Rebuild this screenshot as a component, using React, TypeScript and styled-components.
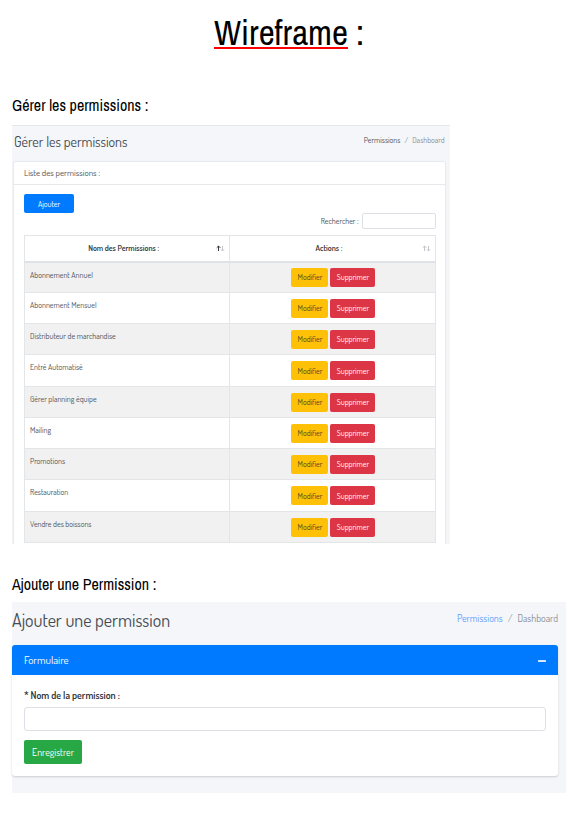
import React from "react";
import styled, { createGlobalStyle } from "styled-components";

const GlobalStyle = createGlobalStyle`
  *, *::before, *::after { box-sizing: border-box; }
  body {
    margin: 0;
    background: #fff;
    color: #000;
    font-family: "Liberation Sans Narrow", "Arial Narrow", "Archivo Narrow", "Roboto Condensed", "Liberation Sans", sans-serif;
  }
  button, input { font: inherit; }
`;

const Page = styled.main`
  padding: 13px 6px 23px 12px;
`;

const Title = styled.h1`
  margin: 0;
  text-align: center;
  font-size: 35px;
  line-height: 40px;
  font-weight: 400;
`;

const Misspelled = styled.span`
  display: inline-block;
  height: 36px;
  border-bottom: 2px solid #f00;
`;

const SectionTitle = styled.h2<{ $top: number }>`
  margin: ${(p) => p.$top}px 0 0;
  font-size: 16px;
  line-height: 20px;
  font-weight: 400;
`;

const Panel = styled.section<{ $width: string }>`
  width: ${(p) => p.$width};
  background: #f4f6f9;
  color: #495057;
  font-family: Dosis, Lato, sans-serif;
`;

const ListPanel = styled(Panel)`
  margin-top: 10px;
  padding: 0 5px 0 2px;
  border-top: 1px solid #e4e7ec;
`;

const FormPanel = styled(Panel)`
  margin-top: 8px;
  padding: 0 8px 17px 0;
`;

const PanelHead = styled.header<{ $height: number }>`
  display: flex;
  justify-content: space-between;
  height: ${(p) => p.$height}px;
`;

const Heading = styled.h3<{ $size: number }>`
  margin: 0;
  font-size: ${(p) => p.$size}px;
  line-height: ${(p) => p.$size + 18}px;
  font-weight: 400;
  color: #454b51;
`;

const Breadcrumb = styled.nav<{ $size: number }>`
  display: flex;
  gap: ${(p) => (p.$size > 8 ? 5 : 4)}px;
  font-size: ${(p) => p.$size}px;
  line-height: ${(p) => (p.$size > 8 ? 32 : 29)}px;
  color: #868e96;
`;

const Crumb = styled.a<{ $color: string }>`
  color: ${(p) => p.$color};
  text-decoration: none;
`;

const ListCard = styled.div`
  background: #fff;
  border-radius: 2px 2px 0 0;
  box-shadow: 0 0 1px 1px #e6e9ef;
  clip-path: inset(-2px -2px 0 -2px);
`;

const ListCardHead = styled.div`
  height: 23px;
  padding: 0 10px;
  border-bottom: 1px solid #e6e8eb;
  font-size: 9px;
  line-height: 22px;
`;

const ListCardBody = styled.div`
  padding: 9px 9px 1px 10px;
`;

const AddButton = styled.button`
  display: block;
  width: 50px;
  height: 19px;
  padding: 0;
  border: 0;
  border-radius: 2px;
  background: #007bff;
  color: #fff;
  font-size: 8px;
`;

const SearchLabel = styled.label`
  display: flex;
  justify-content: flex-end;
  align-items: center;
  gap: 3px;
  margin-bottom: 6px;
  font-size: 8px;
`;

const SearchInput = styled.input`
  width: 74px;
  height: 16px;
  border: 1px solid #dde1e6;
  border-radius: 2px;
  background: #fff;
`;

const Table = styled.table`
  width: 100%;
  table-layout: fixed;
  border-collapse: collapse;
  border: 1px solid #e3e6e9;
  font-size: 8px;
  line-height: 10px;
`;

const HeadCell = styled.th`
  height: 26px;
  padding: 0 4px 0 6px;
  border: 1px solid #e3e6e9;
  border-bottom: 2px solid #dfe3e8;
  color: #343a40;
  font-weight: 600;
`;

const HeadInner = styled.div`
  display: flex;
  align-items: center;
`;

const HeadText = styled.span`
  flex: 1;
  text-align: center;
`;

const Row = styled.tr`
  height: 31px;
  &:nth-child(odd) { background: #f1f1f1; }
  &:nth-child(4n) { height: 32px; }
`;

const NameCell = styled.td`
  padding: 7px 5px 0;
  border: 1px solid #e3e6e9;
  vertical-align: top;
`;

const ActionCell = styled.td`
  padding: 0;
  border: 1px solid #e3e6e9;
`;

const Actions = styled.div`
  display: flex;
  justify-content: center;
  gap: 2px;
  padding-left: 2px;
`;

const ActionButton = styled.button<{ $kind: "edit" | "delete" }>`
  width: ${(p) => (p.$kind === "edit" ? 37 : 45)}px;
  height: 19px;
  padding: 0;
  border: 0;
  border-radius: 2px;
  background: ${(p) => (p.$kind === "edit" ? "#ffc107" : "#dc3545")};
  color: ${(p) => (p.$kind === "edit" ? "#4b4426" : "#fff")};
  font-size: 8px;
`;

const FormCard = styled.div`
  border-radius: 3px;
  background: #fff;
  box-shadow: 0 1px 2px #c9ccd1;
`;

const FormCardHead = styled.div`
  display: flex;
  justify-content: space-between;
  align-items: center;
  height: 30px;
  padding: 0 11px 0 12px;
  border-radius: 3px 3px 0 0;
  background: #007bff;
  color: #fff;
  font-size: 11px;
`;

const CollapseButton = styled.button`
  display: flex;
  padding: 0;
  border: 0;
  background: none;
  color: #d5e8ff;
`;

const Form = styled.form`
  padding: 13px 12px 12px;
`;

const FieldLabel = styled.label`
  display: block;
  margin-bottom: 4px;
  color: #2f353b;
  font-size: 10px;
  line-height: 15px;
  font-weight: 600;
`;

const FieldInput = styled.input`
  display: block;
  width: 100%;
  height: 24px;
  padding: 0 8px;
  border: 1px solid #dde0e4;
  border-radius: 3px;
  background: #fff;
`;

const SaveButton = styled.button`
  display: block;
  width: 58px;
  height: 24px;
  margin-top: 9px;
  padding: 0;
  border: 0;
  border-radius: 2px;
  background: #28a745;
  color: #fff;
  font-size: 10px;
`;

const permissions = [
  "Abonnement Annuel",
  "Abonnement Mensuel",
  "Distributeur de marchandise",
  "Entré Automatisé",
  "Gérer planning équipe",
  "Mailing",
  "Promotions",
  "Restauration",
  "Vendre des boissons",
];

function SortIcon({ active }: { active?: boolean }) {
  return (
    <svg width="9" height="7" viewBox="0 0 9 7" fill="none" aria-hidden="true">
      <path d="M2.5 6V1M.7 2.8 2.5 1l1.8 1.8" stroke={active ? "#343a40" : "#c3c6ca"} />
      <path d="M6.5 1v5M4.9 4.3 6.5 6l1.6-1.7" stroke="#c3c6ca" />
    </svg>
  );
}

export default function App() {
  return (
    <>
      <GlobalStyle />
      <Page>
        <Title>
          <Misspelled>Wireframe</Misspelled> :
        </Title>

        <SectionTitle $top={42}>Gérer les permissions :</SectionTitle>
        <ListPanel $width="79%">
          <PanelHead $height={36}>
            <Heading $size={14}>Gérer les permissions</Heading>
            <Breadcrumb $size={8} aria-label="Permissions">
              <Crumb href="#permissions" $color="#495057">Permissions</Crumb>
              <span>/</span>
              <span>Dashboard</span>
            </Breadcrumb>
          </PanelHead>
          <ListCard>
            <ListCardHead>Liste des permissions :</ListCardHead>
            <ListCardBody>
              <AddButton type="button">Ajouter</AddButton>
              <SearchLabel>
                Rechercher :
                <SearchInput type="search" />
              </SearchLabel>
              <Table>
                <thead>
                  <tr>
                    <HeadCell scope="col">
                      <HeadInner>
                        <HeadText>Nom des Permissions :</HeadText>
                        <SortIcon active />
                      </HeadInner>
                    </HeadCell>
                    <HeadCell scope="col">
                      <HeadInner>
                        <HeadText>Actions :</HeadText>
                        <SortIcon />
                      </HeadInner>
                    </HeadCell>
                  </tr>
                </thead>
                <tbody>
                  {permissions.map((name) => (
                    <Row key={name}>
                      <NameCell>{name}</NameCell>
                      <ActionCell>
                        <Actions>
                          <ActionButton type="button" $kind="edit">Modifier</ActionButton>
                          <ActionButton type="button" $kind="delete">Supprimer</ActionButton>
                        </Actions>
                      </ActionCell>
                    </Row>
                  ))}
                </tbody>
              </Table>
            </ListCardBody>
          </ListCard>
        </ListPanel>

        <SectionTitle $top={30}>Ajouter une Permission :</SectionTitle>
        <FormPanel $width="100%">
          <PanelHead $height={43}>
            <Heading $size={18}>Ajouter une permission</Heading>
            <Breadcrumb $size={10} aria-label="Ajouter une permission">
              <Crumb href="#permissions" $color="#5c9dff">Permissions</Crumb>
              <span>/</span>
              <span>Dashboard</span>
            </Breadcrumb>
          </PanelHead>
          <FormCard>
            <FormCardHead>
              Formulaire
              <CollapseButton type="button" aria-label="Réduire">
                <svg width="10" height="10" viewBox="0 0 10 10" aria-hidden="true">
                  <rect x="1" y="5" width="8" height="2" rx=".5" fill="currentColor" />
                </svg>
              </CollapseButton>
            </FormCardHead>
            <Form>
              <FieldLabel htmlFor="permission-name">* Nom de la permission :</FieldLabel>
              <FieldInput id="permission-name" type="text" />
              <SaveButton type="button">Enregistrer</SaveButton>
            </Form>
          </FormCard>
        </FormPanel>
      </Page>
    </>
  );
}
